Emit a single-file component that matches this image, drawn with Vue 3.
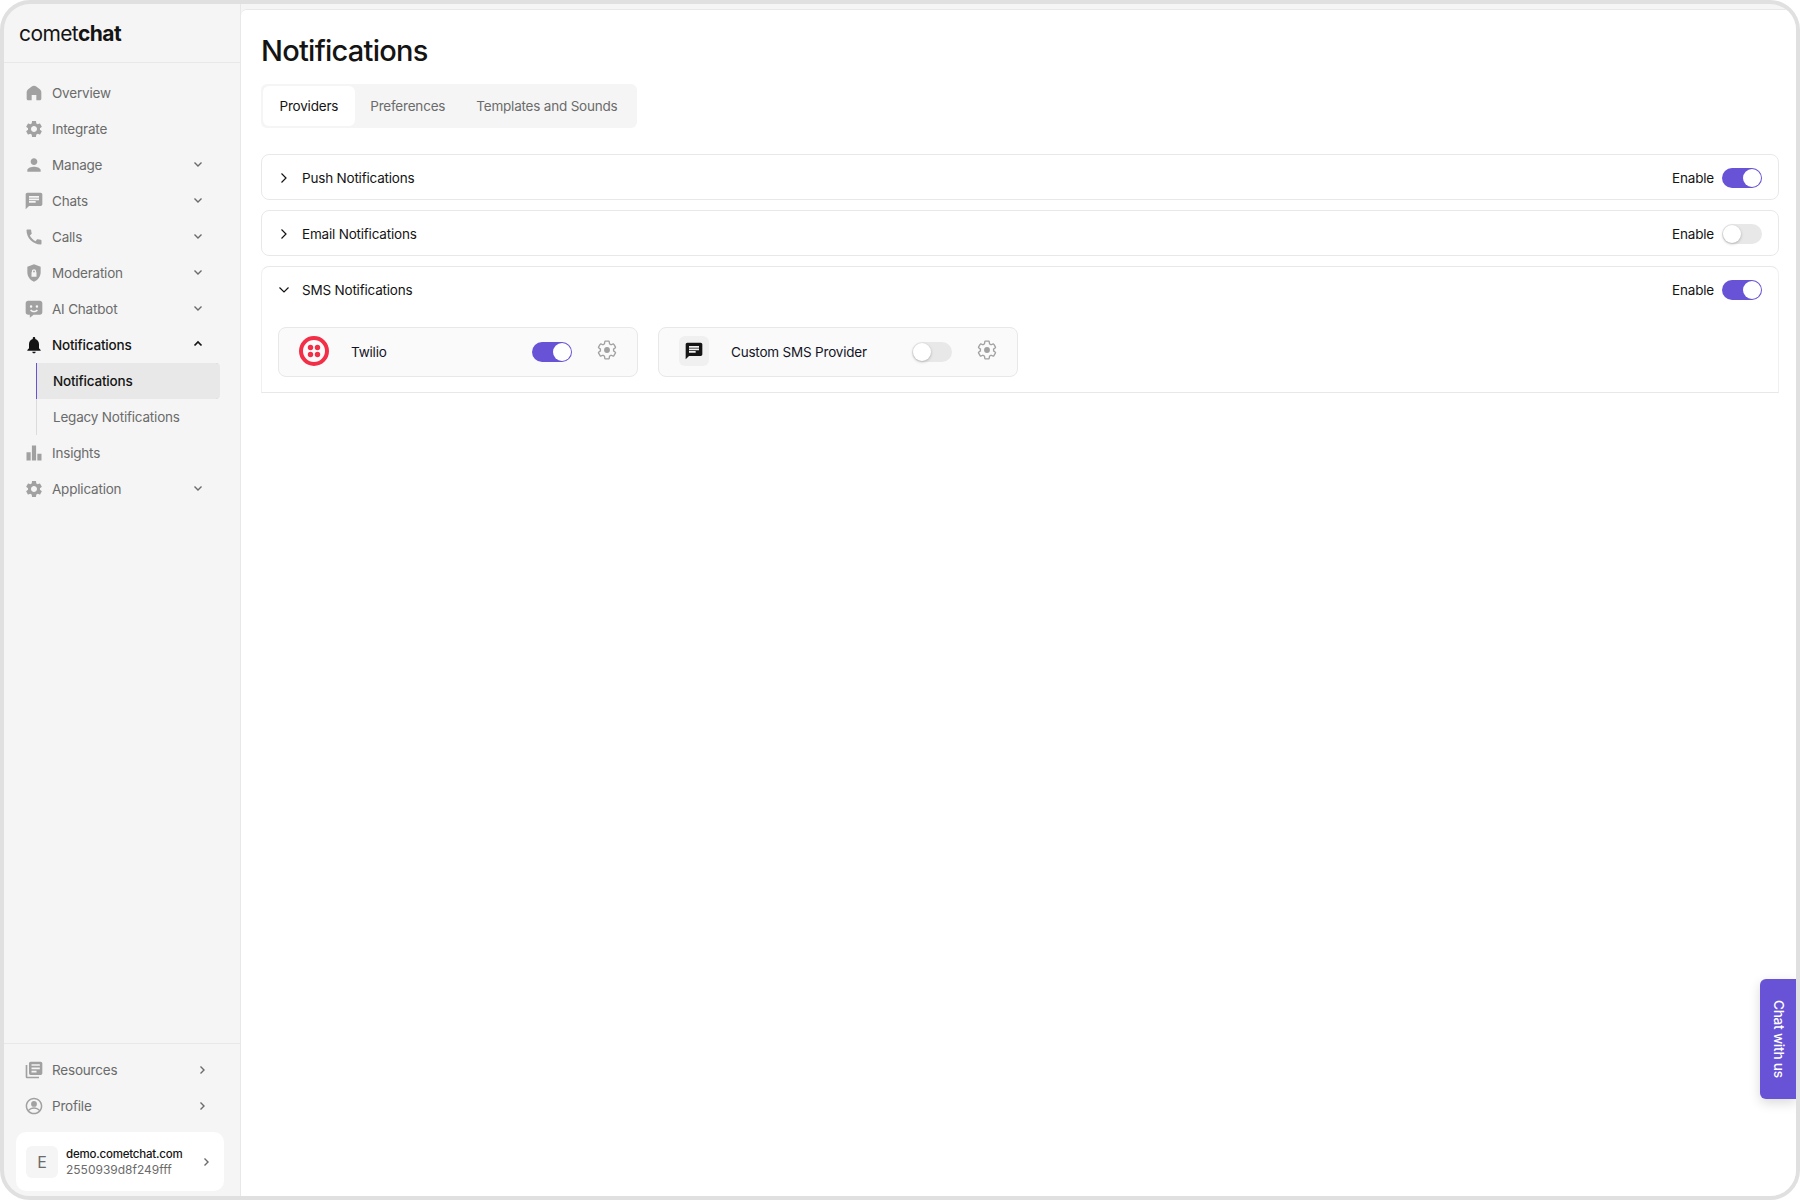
<script setup>
const I = {
  home: 'M12 3.2c-1 0-1.900.4-2.700 1L5 7.600C3.800 8.600 3.200 10 3.200 11.400V19c0 1 .8 1.800 1.800 1.800h4.200v-6.300h5.600v6.300H19c1 0 1.800-.8 1.800-1.800v-7.600c0-1.400-.6-2.800-1.800-3.800l-4.300-3.400c-.8-.6-1.700-1-2.700-1z',
  gear: 'M19.140 12.940c.04-.3.06-.61.06-.94 0-.32-.02-.64-.07-.94l2.030-1.580c.18-.14.23-.41.12-.61l-1.920-3.320c-.12-.22-.37-.29-.59-.22l-2.390.96c-.5-.38-1.030-.7-1.620-.94l-.36-2.540c-.04-.24-.24-.41-.48-.41h-3.840c-.24 0-.43.17-.47.41l-.36 2.540c-.59.24-1.130.57-1.620.94l-2.390-.96c-.22-.08-.47 0-.59.22L2.740 8.870c-.12.21-.08.47.12.61l2.030 1.580c-.05.3-.09.63-.09.94s.02.64.07.94l-2.030 1.580c-.18.14-.23.41-.12.61l1.920 3.320c.12.22.37.29.59.22l2.390-.96c.5.38 1.030.7 1.620.94l.36 2.540c.05.24.24.41.48.41h3.840c.24 0 .44-.17.47-.41l.36-2.540c.59-.24 1.130-.56 1.620-.94l2.390.96c.22.08.47 0 .59-.22l1.920-3.320c.12-.22.07-.47-.12-.61l-2.010-1.580zM12 15.600c-1.980 0-3.600-1.620-3.600-3.600s1.620-3.600 3.600-3.600 3.600 1.620 3.600 3.600-1.620 3.600-3.600 3.600z',
  person: 'M12 12c2.210 0 4-1.790 4-4s-1.790-4-4-4-4 1.790-4 4 1.790 4 4 4zm0 2c-2.670 0-8 1.340-8 4v2h16v-2c0-2.660-5.330-4-8-4z',
  chat: 'M20 2H4c-1.100 0-1.990.9-1.990 2L2 22l4-4h14c1.100 0 2-.9 2-2V4c0-1.100-.9-2-2-2zM6 9h12v2H6V9zm8 5H6v-2h8v2zm4-6H6V6h12v2z',
  phone: 'M20.010 15.380c-1.230 0-2.420-.2-3.530-.56-.35-.12-.74-.03-1.010.24l-1.570 1.970c-2.830-1.350-5.480-3.900-6.890-6.830l1.950-1.660c.27-.28.35-.67.24-1.020-.37-1.110-.56-2.300-.56-3.530 0-.54-.45-.99-.99-.99H4.190C3.650 3 3 3.240 3 3.990 3 13.280 10.730 21 20.010 21c.71 0 .99-.63.99-1.180v-3.450c0-.54-.45-.99-.99-.99z',
  shield: 'M12 1.500L4 4.500v6.600c0 5 3.400 9.600 8 11.400 4.600-1.800 8-6.400 8-11.400V4.500zM12 7.500c1.400 0 2.500 1.100 2.500 2.500v1h.5v5.500H9V11h.5v-1c0-1.400 1.100-2.500 2.500-2.500zm0 1.500c-.6 0-1 .4-1 1v1h2v-1c0-.6-.4-1-1-1z',
  bot: 'M19 2H5C3.300 2 2 3.300 2 5v11c0 1.700 1.300 3 3 3h2v3.500L11.500 19H19c1.700 0 3-1.300 3-3V5c0-1.700-1.300-3-3-3zM8.500 7.500a1.500 1.500 0 1 1 0 3 1.500 1.500 0 0 1 0-3zm7 0a1.500 1.500 0 1 1 0 3 1.500 1.500 0 0 1 0-3zM12 16c-2 0-3.800-1-4.700-2.600l1.500-.9c.6 1 1.800 1.700 3.200 1.700s2.600-.7 3.200-1.700l1.500.9C15.800 15 14 16 12 16z',
  bell: 'M12 22c1.100 0 2-.9 2-2h-4c0 1.100.89 2 2 2zm6-6v-5c0-3.070-1.640-5.640-4.500-6.320V4c0-.83-.67-1.500-1.500-1.500s-1.500.67-1.500 1.500v.68C7.630 5.360 6 7.920 6 11v5l-2 2v1h16v-1l-2-2z',
  bars: 'M3 11h5v10H3zM9.500 3h5v18h-5zM16 13h5v8h-5z',
  books: 'M4 6H2v14c0 1.100.9 2 2 2h14v-2H4V6zm16-4H8c-1.100 0-2 .9-2 2v12c0 1.100.9 2 2 2h12c1.100 0 2-.9 2-2V4c0-1.100-.9-2-2-2zm-1 9H9V9h10v2zm-4 4H9v-2h6v2zm4-8H9V5h10v2z',
  profile: 'M12 2C6.480 2 2 6.480 2 12s4.480 10 10 10 10-4.480 10-10S17.520 2 12 2zm0 18.200c-2.300 0-4.400-.95-5.900-2.500 1.400-1.600 3.500-2.500 5.900-2.500s4.500.9 5.900 2.500c-1.500 1.550-3.600 2.500-5.900 2.500zM12 3.800c4.500 0 8.200 3.700 8.200 8.200 0 1.600-.5 3.100-1.300 4.400-1.700-1.800-4.200-2.900-6.900-2.900s-5.200 1.100-6.900 2.900C4.300 15.100 3.800 13.600 3.800 12c0-4.500 3.700-8.200 8.200-8.200zM12 6a3.500 3.500 0 1 0 0 7 3.500 3.500 0 0 0 0-7z'
}
const nav = [
  { label: 'Overview', icon: 'home' },
  { label: 'Integrate', icon: 'gear' },
  { label: 'Manage', icon: 'person', chev: 'down' },
  { label: 'Chats', icon: 'chat', chev: 'down' },
  { label: 'Calls', icon: 'phone', chev: 'down' },
  { label: 'Moderation', icon: 'shield', chev: 'down' },
  { label: 'AI Chatbot', icon: 'bot', chev: 'down' },
  { label: 'Notifications', icon: 'bell', chev: 'up', active: true }
]
const navAfter = [
  { label: 'Insights', icon: 'bars' },
  { label: 'Application', icon: 'gear', chev: 'down' }
]
const bottom = [
  { label: 'Resources', icon: 'books' },
  { label: 'Profile', icon: 'profile' }
]
const gearLine = 'M19.140 12.940c.04-.3.06-.61.06-.94 0-.32-.02-.64-.07-.94l2.030-1.580c.18-.14.23-.41.12-.61l-1.920-3.320c-.12-.22-.37-.29-.59-.22l-2.390.96c-.5-.38-1.030-.7-1.620-.94l-.36-2.540c-.04-.24-.24-.41-.48-.41h-3.840c-.24 0-.43.17-.47.41l-.36 2.540c-.59.24-1.130.57-1.620.94l-2.390-.96c-.22-.08-.47 0-.59.22L2.740 8.870c-.12.21-.08.47.12.61l2.030 1.580c-.05.3-.09.63-.09.94s.02.64.07.94l-2.030 1.580c-.18.14-.23.41-.12.61l1.920 3.320c.12.22.37.29.59.22l2.390-.96c.5.38 1.030.7 1.620.94l.36 2.540c.05.24.24.41.48.41h3.840c.24 0 .44-.17.47-.41l.36-2.540c.59-.24 1.130-.56 1.620-.94l2.390.96c.22.08.47 0 .59-.22l1.920-3.320c.12-.22.07-.47-.12-.61l-2.010-1.580z'
</script>

<template>
  <div class="frame">
    <aside class="sidebar">
      <div class="logo">comet<b>chat</b></div>
      <nav class="nav">
        <div v-for="n in nav" :key="n.label" class="row" :class="{ active: n.active }">
          <svg class="ic" viewBox="0 0 24 24"><path :d="I[n.icon]" fill-rule="evenodd" /></svg>
          <span class="lbl">{{ n.label }}</span>
          <svg v-if="n.chev" class="chev" :class="n.chev" viewBox="0 0 12 12"><path d="M2.500 4.500L6 8l3.500-3.500" /></svg>
        </div>
        <div class="subs">
          <div class="sub on">Notifications</div>
          <div class="sub">Legacy Notifications</div>
        </div>
        <div v-for="n in navAfter" :key="n.label" class="row">
          <svg class="ic" viewBox="0 0 24 24"><path :d="I[n.icon]" fill-rule="evenodd" /></svg>
          <span class="lbl">{{ n.label }}</span>
          <svg v-if="n.chev" class="chev" viewBox="0 0 12 12"><path d="M2.500 4.500L6 8l3.500-3.500" /></svg>
        </div>
      </nav>
      <div class="foot">
        <div v-for="n in bottom" :key="n.label" class="row">
          <svg class="ic" viewBox="0 0 24 24"><path :d="I[n.icon]" fill-rule="evenodd" /></svg>
          <span class="lbl">{{ n.label }}</span>
          <svg class="chev right" viewBox="0 0 12 12"><path d="M4.500 2.500L8 6l-3.500 3.500" /></svg>
        </div>
        <div class="account">
          <div class="avatar">E</div>
          <div class="acct-text">
            <div class="domain">demo.cometchat.com</div>
            <div class="appid">2550939d8f249fff</div>
          </div>
          <svg class="chev acct-chev" viewBox="0 0 12 12"><path d="M4.500 2.500L8 6l-3.500 3.500" /></svg>
        </div>
      </div>
    </aside>

    <main class="main">
      <h1>Notifications</h1>
      <div class="tabs">
        <div class="tab sel">Providers</div>
        <div class="tab">Preferences</div>
        <div class="tab">Templates and Sounds</div>
      </div>

      <section class="acc">
        <div class="acc-head">
          <svg class="caret" viewBox="0 0 12 12"><path d="M3.500 1.500L8 6l-4.500 4.500" /></svg>
          <span class="acc-title">Push Notifications</span>
          <span class="en">Enable</span>
          <span class="tg on"></span>
        </div>
      </section>
      <section class="acc">
        <div class="acc-head">
          <svg class="caret" viewBox="0 0 12 12"><path d="M3.500 1.500L8 6l-4.500 4.500" /></svg>
          <span class="acc-title">Email Notifications</span>
          <span class="en">Enable</span>
          <span class="tg"></span>
        </div>
      </section>
      <section class="acc open">
        <div class="acc-head">
          <svg class="caret" viewBox="0 0 12 12"><path d="M1.500 3.500L6 8l4.500-4.500" /></svg>
          <span class="acc-title">SMS Notifications</span>
          <span class="en">Enable</span>
          <span class="tg on"></span>
        </div>
        <div class="providers">
          <div class="prov">
            <svg class="twilio" viewBox="0 0 30 30">
              <circle cx="15" cy="15" r="13" fill="none" stroke="#f22f46" stroke-width="4" />
              <circle cx="11.500" cy="11.500" r="2.700" fill="#f22f46" />
              <circle cx="18.500" cy="11.500" r="2.700" fill="#f22f46" />
              <circle cx="11.500" cy="18.500" r="2.700" fill="#f22f46" />
              <circle cx="18.500" cy="18.500" r="2.700" fill="#f22f46" />
            </svg>
            <span class="prov-name">Twilio</span>
            <span class="tg on"></span>
            <svg class="cog" viewBox="0 0 24 24"><path :d="gearLine" class="cog-line" /><circle cx="12" cy="12" r="3.200" /></svg>
          </div>
          <div class="prov">
            <div class="msg-box"><svg viewBox="0 0 24 24"><path :d="I.chat" fill-rule="evenodd" /></svg></div>
            <span class="prov-name">Custom SMS Provider</span>
            <span class="tg"></span>
            <svg class="cog" viewBox="0 0 24 24"><path :d="gearLine" class="cog-line" /><circle cx="12" cy="12" r="3.200" /></svg>
          </div>
        </div>
      </section>
    </main>

    <div class="chatbtn">Chat with us</div>
  </div>
</template>

<style>
html, body { margin: 0; background: #fff; }
</style>

<style scoped>
.frame {
  position: relative;
  width: 1800px;
  height: 1200px;
  box-sizing: border-box;
  border: 4px solid #e0e0e0;
  border-radius: 30px;
  overflow: hidden;
  display: flex;
  background: #f5f5f5;
  font-family: Inter, "Liberation Sans", sans-serif;
  font-size: 13.500px;
  letter-spacing: -0.2px;
  color: #141414;
}
.sidebar {
  width: 237px;
  flex: none;
  box-sizing: border-box;
  display: flex;
  flex-direction: column;
  border-right: 1px solid #e8e8e8;
  padding-top: 5px;
}
.logo {
  height: 54px;
  box-sizing: border-box;
  padding: 9px 0 0 15px;
  border-bottom: 1px solid #e8e8e8;
  font-size: 21px;
  line-height: 32px;
  letter-spacing: -0.6px;
  color: #141414;
}
.logo b { font-weight: 700; }
.nav { padding-top: 12px; flex: 1; }
.row {
  height: 36px;
  display: flex;
  align-items: center;
  padding-left: 20px;
  color: #6b6b6b;
}
.ic {
  width: 20px;
  height: 20px;
  fill: #a1a1a1;
  flex: none;
}
.lbl { margin-left: 8px; flex: 1; }
.row.active { color: #141414; font-weight: 500; }
.row.active .ic { fill: #141414; }
.chev {
  width: 12px;
  height: 12px;
  flex: none;
  margin-right: 36px;
  margin-top: -3px;
  fill: none;
  stroke: #6b6b6b;
  stroke-width: 1.400;
}
.chev.up { transform: rotate(180deg); stroke: #141414; stroke-width: 1.700; }
.chev.right { margin-right: 32px; margin-top: 0; }
.subs { margin-left: 32px; width: 183px; border-left: 1px solid #dcdcdc; }
.sub {
  height: 36px;
  display: flex;
  align-items: center;
  padding-left: 16px;
  color: #6b6b6b;
}
.sub.on {
  background: #e8e8e8;
  color: #141414;
  font-weight: 500;
  border-radius: 0 4px 4px 0;
  box-shadow: -1px 0 0 #6852d6;
}
.foot {
  border-top: 1px solid #e8e8e8;
  padding-top: 8px;
}
.account {
  margin: 8px 16px 5px 12px;
  height: 59px;
  background: #fff;
  border-radius: 10px;
  display: flex;
  align-items: center;
  padding-left: 10px;
}
.avatar {
  width: 32px;
  height: 32px;
  border-radius: 6px;
  background: #f5f5f5;
  color: #6b6b6b;
  font-size: 16px;
  display: flex;
  align-items: center;
  justify-content: center;
  flex: none;
}
.acct-text { margin-left: 8px; flex: 1; line-height: 15px; font-size: 12px; white-space: nowrap; letter-spacing: 0; }
.domain { color: #141414; font-weight: 500; font-size: 11.500px; letter-spacing: -0.2px; }
.appid { color: #6b6b6b; }
.acct-chev { margin-right: 12px; margin-top: 0; }

.main {
  flex: 1;
  margin-top: 5px;
  background: #fff;
  border-top: 1px solid #e8e8e8;
  border-radius: 6px 0 0 0;
  box-sizing: border-box;
  padding: 0 17px 0 20px;
  min-width: 0;
}
h1 {
  margin: 0;
  padding-top: 23px;
  font-size: 29px;
  line-height: 36px;
  font-weight: 500;
  letter-spacing: -0.75px;
  color: #141414;
}
.tabs {
  margin-top: 15px;
  display: inline-flex;
  box-sizing: border-box;
  height: 44px;
  width: 376px;
  padding: 2px;
  background: #f5f5f5;
  border-radius: 6px;
  vertical-align: top;
}
.tab {
  display: flex;
  align-items: center;
  padding: 0 15.500px 1px;
  color: #6b6b6b;
  border-radius: 6px;
  white-space: nowrap;
}
.tab.sel { background: #fff; color: #141414; padding: 0 16.500px 1px; }
.acc {
  border: 1px solid #e8e8e8;
  border-radius: 8px;
  margin-top: 10px;
  background: #fff;
}
.tabs + .acc { margin-top: 26px; }
.acc.open {
  border-radius: 8px 8px 0 0;
  border-left-color: #f0f0f0;
  border-right-color: #f0f0f0;
  height: 127px;
  box-sizing: border-box;
}
.acc-head {
  height: 44px;
  display: flex;
  align-items: center;
  padding: 0 16px;
}
.caret {
  width: 12px;
  height: 12px;
  flex: none;
  fill: none;
  stroke: #141414;
  stroke-width: 1.200;
  margin-top: 1px;
}
.acc-title { margin: 1px 0 0 12px; flex: 1; color: #141414; }
.en { margin: 1px 8px 0 0; color: #141414; }
.tg {
  position: relative;
  width: 40px;
  height: 20px;
  box-sizing: border-box;
  border-radius: 10px;
  background: #e8e8e8;
  flex: none;
  display: block;
  margin-top: 1px;
}
.prov .tg { margin-top: 0; }
.tg::after {
  content: "";
  position: absolute;
  left: 1px;
  top: 1px;
  width: 18px;
  height: 18px;
  border-radius: 50%;
  background: #fff;
  box-shadow: 0 1px 3px rgba(0, 0, 0, 0.25);
}
.tg.on { background: #6852d6; }
.tg.on::after { left: 21px; box-shadow: none; }
.providers {
  display: flex;
  gap: 20px;
  padding: 16px 16px 0;
}
.prov {
  width: 360px;
  height: 50px;
  box-sizing: border-box;
  border: 1px solid #e8e8e8;
  border-radius: 8px;
  background: #fafafa;
  display: flex;
  align-items: center;
  padding-left: 20px;
}
.twilio { width: 30px; height: 30px; flex: none; margin-top: -2px; }
.msg-box {
  width: 30px;
  height: 30px;
  background: #f0f0f0;
  border-radius: 6px;
  flex: none;
  display: flex;
  align-items: center;
  justify-content: center;
  margin-top: -2px;
}
.msg-box svg { width: 20px; height: 20px; fill: #141414; }
.prov-name { margin-left: 22px; flex: 1; color: #141426; margin-top: -1px; }
.cog {
  width: 22px;
  height: 22px;
  margin: -4px 19px 0 24px;
  flex: none;
  fill: #a1a1a1;
}
.cog-line { fill: none; stroke: #a1a1a1; stroke-width: 1.400; }
.chatbtn {
  position: absolute;
  right: 0;
  top: 975px;
  width: 36px;
  height: 120px;
  box-sizing: border-box;
  padding-left: 2px;
  background: #6852d6;
  color: #fff;
  border-radius: 6px 0 0 6px;
  writing-mode: vertical-rl;
  display: flex;
  align-items: center;
  justify-content: center;
  font-size: 13.500px;
  font-weight: 500;
  box-shadow: 0 4px 12px rgba(0, 0, 0, 0.15);
}
</style>
